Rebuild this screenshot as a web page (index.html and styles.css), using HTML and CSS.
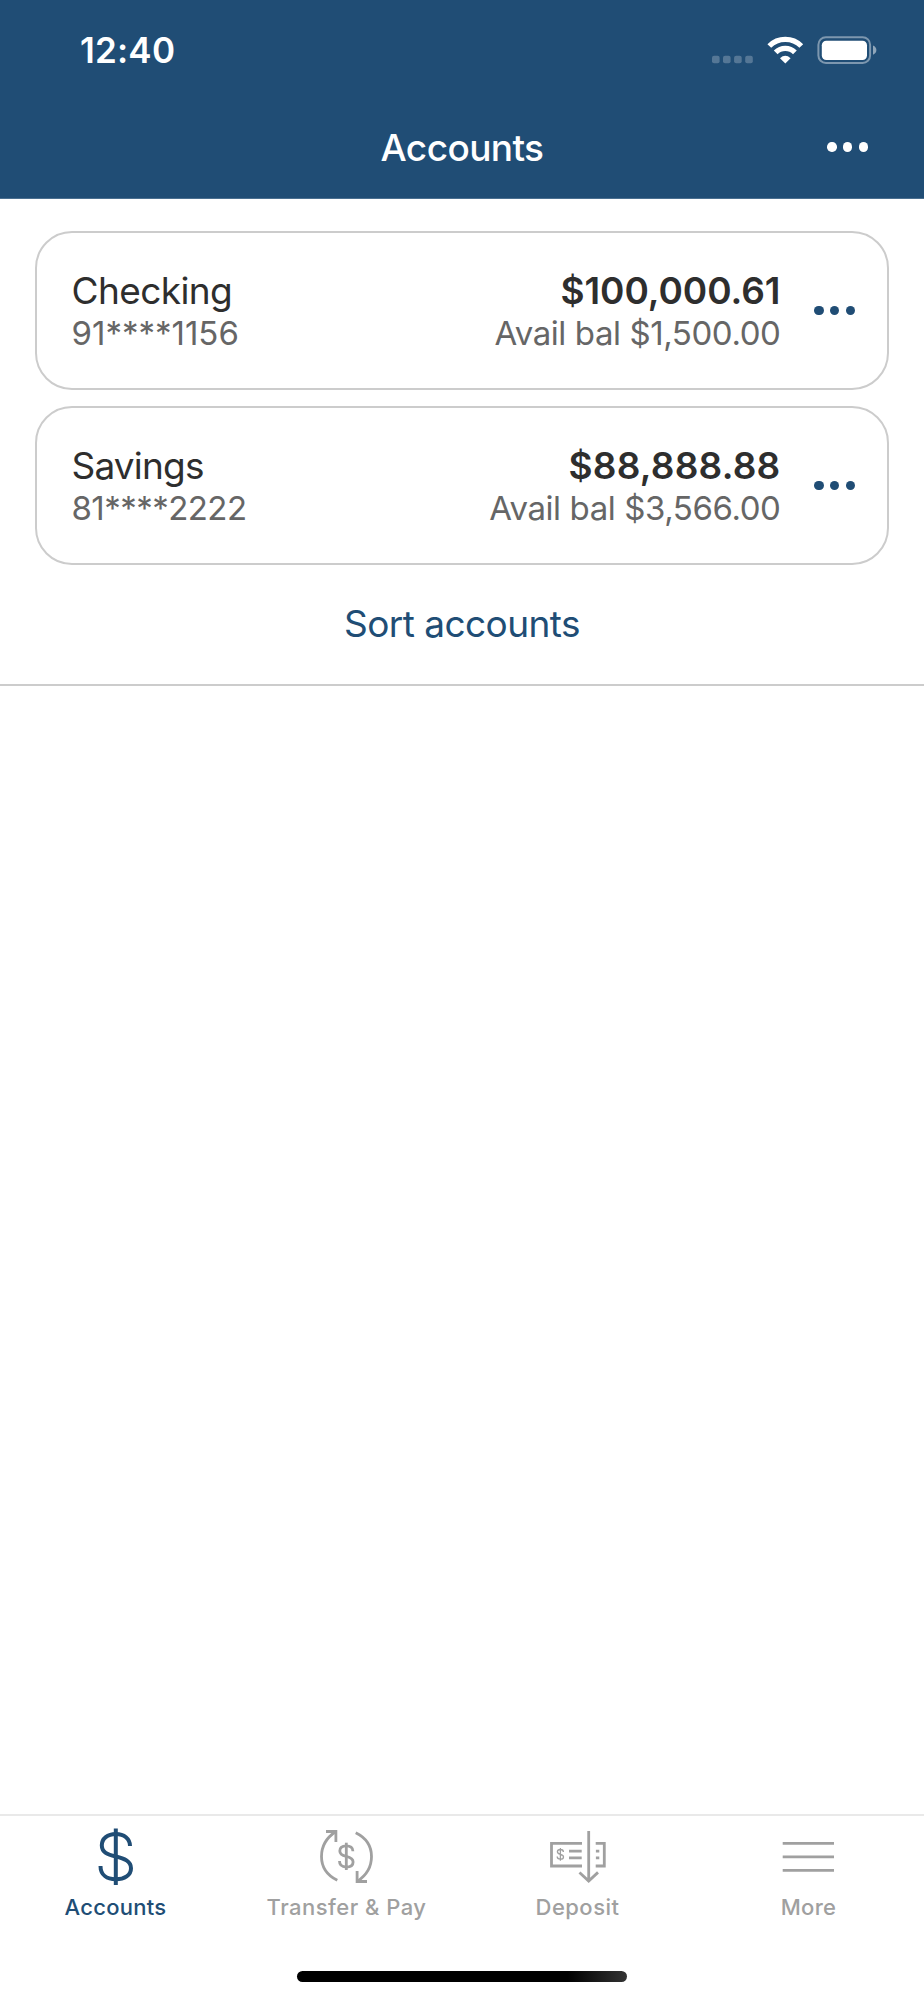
FILE: index.html
```html
<!DOCTYPE html>
<html lang="en">
<head>
    <meta charset="UTF-8">
    <meta name="viewport" content="width=device-width, initial-scale=1.0">
    <title>Accounts</title>
    <link rel="stylesheet" href="styles.css">
</head>
<body>
    <header class="header">
        <div class="status-bar">
            <span class="time">12:40</span>
            <div class="status-icons">
                <svg class="signal" width="41" height="28" viewBox="0 0 41 28" fill="#fff" fill-opacity="0.24">
                    <rect x="0" y="19.7" width="7.6" height="7.6" rx="2"/>
                    <rect x="11" y="19.7" width="7.6" height="7.6" rx="2"/>
                    <rect x="22.1" y="19.7" width="7.6" height="7.6" rx="2"/>
                    <rect x="33.2" y="19.7" width="7.6" height="7.6" rx="2"/>
                </svg>
                <svg class="wifi" width="37" height="28" viewBox="0 0 37 28" fill="none" stroke="#fff" stroke-width="5.3">
                    <path d="M2.3 10A22.6 22.6 0 0 1 34.3 10"/>
                    <path d="M8.7 16.4A13.6 13.6 0 0 1 27.9 16.4"/>
                    <path d="M13 22.2Q18.3 17.4 23.6 22.2L18.3 27.4Z" fill="#fff" stroke="none"/>
                </svg>
                <svg class="battery" width="60" height="28" viewBox="0 0 60 28" fill="#fff">
                    <rect x="1.4" y="1.2" width="51.7" height="25.7" rx="7.5" fill="none" stroke="#fff" stroke-opacity="0.42" stroke-width="2"/>
                    <rect x="4.8" y="4.8" width="45.2" height="19.3" rx="4.5"/>
                    <path d="M56 9.5Q59.4 11 59.4 14.1T56 18.8Z" fill-opacity="0.5"/>
                </svg>
            </div>
        </div>
        <div class="nav-bar">
            <h1>Accounts</h1>
            <button class="dots" aria-label="Options"><i></i><i></i><i></i></button>
        </div>
    </header>

    <main class="content">
        <section class="accounts">
            <div class="card">
                <div class="account">
                    <div class="name">Checking</div>
                    <div class="number">91****1156</div>
                </div>
                <div class="balance">
                    <div class="amount">$100,000.61</div>
                    <div class="available">Avail bal $1,500.00</div>
                </div>
                <button class="dots" aria-label="Checking options"><i></i><i></i><i></i></button>
            </div>
            <div class="card">
                <div class="account savings">
                    <div class="name">Savings</div>
                    <div class="number">81****2222</div>
                </div>
                <div class="balance savings">
                    <div class="amount">$88,888.88</div>
                    <div class="available">Avail bal $3,566.00</div>
                </div>
                <button class="dots" aria-label="Savings options"><i></i><i></i><i></i></button>
            </div>
            <a class="sort">Sort accounts</a>
        </section>
    </main>

    <nav class="tab-bar">
        <a class="tab active">
            <svg width="64" height="77" viewBox="0.5 0 64 77" fill="none" stroke="currentColor" stroke-width="4">
                <path d="M32.3 12.5V69"/>
                <path d="M46.5 30C46.5 22.5 40.5 18 32.3 18S18.3 22.5 18.3 29.3C18.3 36.5 24 38.5 32.3 40.5S47.5 45 47.5 52.3C47.5 59.3 41 63.3 32.3 63.3S17 59 17 50"/>
            </svg>
            <span>Accounts</span>
        </a>
        <a class="tab transfer">
            <svg width="64" height="77" viewBox="0.5 0 64 77" fill="none" stroke="currentColor" stroke-width="2.8">
                <g id="arrow">
                    <path d="M22.8 64.3C14 60 7 52 7 40.5C7 30 13 21 21.4 15.5"/>
                    <path d="M11.5 15.5H21.4V26"/>
                </g>
                <use href="#arrow" transform="rotate(180 32 40.5)"/>
                <path d="M31.8 26.7V54"/>
                <path d="M38.4 35.3C38.4 31.6 35.8 29.8 31.8 29.8S25.3 31.7 25.3 34.9C25.3 38.5 28 39.4 31.8 40.3S38.6 42.3 38.6 45.9C38.6 49.4 35.8 51 31.8 51S25 49.2 25 45.1"/>
            </svg>
            <span>Transfer &amp; Pay</span>
        </a>
        <a class="tab deposit">
            <svg width="64" height="77" viewBox="0.5 0 64 77" fill="none" stroke="currentColor" stroke-width="2.8">
                <path d="M36.5 27.4H6V50H36.5M50.2 27.4H58.8V50H50.2"/>
                <path d="M23.5 35.1H36.2M23.5 41.8H36.2M50.4 35.1H53.8M50.4 41.8H53.8"/>
                <path d="M43.2 15V65M34 56.4L43.2 65L52.5 56.4"/>
                <path d="M14.9 32V44.7M17.9 36C17.9 34.3 16.7 33.5 14.9 33.5S11.9 34.4 11.9 35.8C11.9 37.4 13.1 37.9 14.9 38.3S18 39.3 18 40.9C18 42.5 16.7 43.2 14.9 43.2S11.7 42.4 11.7 40.6" stroke-width="1.3"/>
            </svg>
            <span>Deposit</span>
        </a>
        <a class="tab">
            <svg width="64" height="77" viewBox="0.5 0 64 77" fill="none" stroke="currentColor" stroke-width="2.8">
                <path d="M6.2 27.3H57.5M6.2 40.9H57.5M6.2 54.4H57.5"/>
            </svg>
            <span>More</span>
        </a>
    </nav>
    <div class="home-indicator"></div>
</body>
</html>
```
FILE: styles.css
```css
* {
    box-sizing: border-box;
}
body {
    margin: 0;
    height: 2000px;
    display: flex;
    flex-direction: column;
    background: #fff;
    color: #2e2e2e;
    font-family: Inter, sans-serif;
}
button {
    background: none;
    border: none;
    padding: 0;
    cursor: pointer;
}
.header {
    height: 199px;
    background: #204d75;
    border-bottom: 1px solid #4a6f90;
    color: #fff;
}
.status-bar {
    height: 100px;
    display: flex;
    align-items: center;
    justify-content: space-between;
    padding: 0 47px 0 80px;
}
.time {
    font-size: 35px;
    font-weight: 600;
    line-height: 40px;
    letter-spacing: 0.2px;
}
.status-icons {
    display: flex;
    gap: 13.5px;
}
.nav-bar {
    height: 98px;
    display: grid;
    grid-template-columns: 1fr auto 1fr;
    align-items: center;
    padding: 0 55px 2px;
}
.nav-bar h1 {
    grid-column: 2;
    margin: 0;
    font-size: 37px;
    font-weight: 500;
    line-height: 44px;
    letter-spacing: -0.6px;
}
.dots {
    display: flex;
    gap: 6.2px;
    color: #204d75;
}
.dots i {
    width: 9.4px;
    height: 9.4px;
    border-radius: 50%;
    background: currentColor;
}
.nav-bar .dots {
    justify-self: end;
    margin: 0 1px 2px 0;
    color: #fff;
}
.content {
    flex: 1;
}
.accounts {
    display: flex;
    flex-direction: column;
    align-items: center;
    gap: 16px;
    padding: 32px 35px 0;
    height: 487px;
    border-bottom: 2px solid #ccc;
}
.card {
    width: 100%;
    height: 159px;
    display: flex;
    align-items: center;
    border: 2px solid #ccc;
    border-radius: 37px;
    padding: 0 32px 0 34.5px;
}
.account, .balance {
    padding-top: 2px;
}
.balance {
    margin-left: auto;
    margin-right: 34px;
    text-align: right;
}
.name, .amount {
    font-size: 37px;
    line-height: 44px;
}
.name {
    letter-spacing: -0.6px;
}
.amount {
    font-weight: 600;
    letter-spacing: -0.05px;
}
.number, .available {
    font-size: 33px;
    line-height: 41px;
    color: #666;
}
.available {
    letter-spacing: -0.42px;
}
.savings .name {
    letter-spacing: -0.8px;
}
.savings .number {
    letter-spacing: -0.55px;
}
.savings .amount {
    letter-spacing: 0.2px;
}
.sort {
    margin-top: 21px;
    color: #204d75;
    font-size: 37px;
    line-height: 44px;
    letter-spacing: -0.55px;
}
.tab-bar {
    height: 157px;
    display: grid;
    grid-template-columns: repeat(4, 1fr);
    border-top: 2px solid #e9e9e9;
}
.tab {
    display: flex;
    flex-direction: column;
    align-items: center;
    color: #a0a0a0;
    font-size: 22px;
    font-weight: 500;
    line-height: 28px;
    letter-spacing: 0.28px;
}
.tab.active {
    color: #204d75;
}
.tab.transfer, .tab.deposit {
    letter-spacing: 0.48px;
}
.home-indicator {
    width: 330px;
    height: 11px;
    margin: 0 auto 18px;
    border-radius: 6px;
    background: linear-gradient(to right, #000 82%, #333);
}
```
